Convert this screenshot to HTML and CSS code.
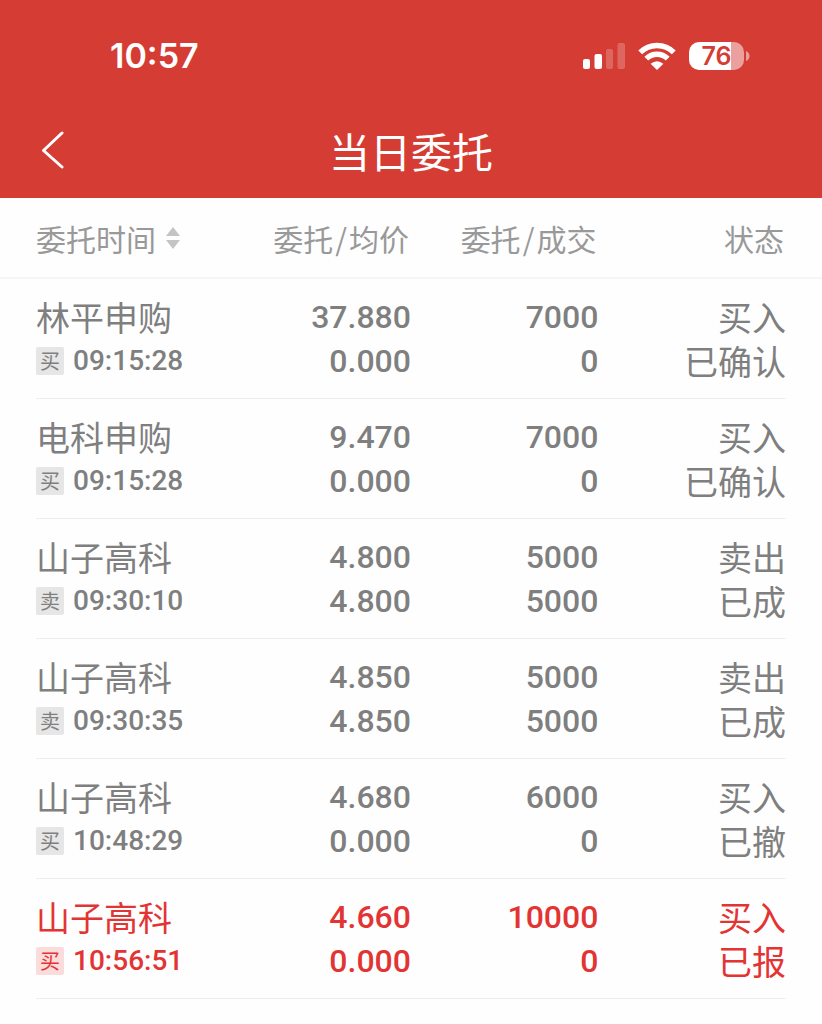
FILE: index.html
```html
<!DOCTYPE html>
<html lang="zh-CN">
<head>
<meta charset="utf-8">
<meta name="viewport" content="width=device-width, initial-scale=1">
<title>当日委托</title>
<link rel="stylesheet" href="styles.css">
</head>
<body>
<header class="top">
  <div class="status-bar">
    <time class="clock">10:57</time>
    <div class="indicators">
      <svg class="signal" width="42" height="28" viewBox="0 0 42 28" aria-hidden="true">
        <g fill="#fff">
          <rect x="0" y="17" width="7" height="10" rx="2"/>
          <rect x="11.500" y="12" width="7.500" height="15" rx="2"/>
          <rect x="23" y="7" width="7" height="20" rx="2" opacity=".22"/>
          <rect x="34.500" y="1" width="7.500" height="26" rx="2" opacity=".22"/>
        </g>
      </svg>
      <svg class="wifi" width="38" height="28" viewBox="0 0 38 28" aria-hidden="true">
        <g fill="none" stroke="#fff" stroke-width="5.400">
          <path d="M2.200 10.400A23.800 23.800 0 0 1 35.800 10.400"/>
          <path d="M8.300 16.700A15.200 15.200 0 0 1 29.700 16.700"/>
        </g>
        <path d="M19 28L12.600 21.700Q19 16.600 25.400 21.700Z" fill="#fff"/>
      </svg>
      <div class="battery">
        <span class="battery-level">76</span>
        <svg class="battery-tip" width="4" height="10" viewBox="0 0 4 10" aria-hidden="true"><path d="M0 0Q3.500 1.500 3.500 5T0 10Z" fill="#fff" opacity=".5"/></svg>
      </div>
    </div>
  </div>
  <div class="nav">
    <button class="back" type="button" aria-label="返回">
      <svg width="22" height="38" viewBox="0 0 22 38" aria-hidden="true"><path d="M20 2L1.500 19.500L20 36" fill="none" stroke="#fff" stroke-width="3" stroke-linecap="round" stroke-linejoin="round"/></svg>
    </button>
    <h1 class="title">当日委托</h1>
  </div>
</header>
<main>
  <table class="orders">
    <colgroup><col class="col-edge"><col class="col-mid"><col class="col-mid"><col class="col-edge"></colgroup>
    <thead>
      <tr>
        <th scope="col"><button class="sort" type="button">委托时间<svg width="14" height="22" viewBox="0 0 14 22" aria-hidden="true"><path d="M7 0L14 9H0ZM0 13H14L7 22Z" fill="#c4c4c4"/></svg></button></th>
        <th scope="col">委托<span class="slash">/</span>均价</th>
        <th scope="col">委托<span class="slash">/</span>成交</th>
        <th scope="col">状态</th>
      </tr>
    </thead>
    <tbody>
      <tr>
        <td><div class="name">林平申购</div><div class="when"><span class="tag">买</span><time>09:15:28</time></div></td>
        <td class="num">37.880<br>0.000</td><td class="num">7000<br>0</td><td class="state">买入<br>已确认</td>
      </tr>
      <tr>
        <td><div class="name">电科申购</div><div class="when"><span class="tag">买</span><time>09:15:28</time></div></td>
        <td class="num">9.470<br>0.000</td><td class="num">7000<br>0</td><td class="state">买入<br>已确认</td>
      </tr>
      <tr>
        <td><div class="name">山子高科</div><div class="when"><span class="tag">卖</span><time>09:30:10</time></div></td>
        <td class="num">4.800<br>4.800</td><td class="num">5000<br>5000</td><td class="state">卖出<br>已成</td>
      </tr>
      <tr>
        <td><div class="name">山子高科</div><div class="when"><span class="tag">卖</span><time>09:30:35</time></div></td>
        <td class="num">4.850<br>4.850</td><td class="num">5000<br>5000</td><td class="state">卖出<br>已成</td>
      </tr>
      <tr>
        <td><div class="name">山子高科</div><div class="when"><span class="tag">买</span><time>10:48:29</time></div></td>
        <td class="num">4.680<br>0.000</td><td class="num">6000<br>0</td><td class="state">买入<br>已撤</td>
      </tr>
      <tr class="active">
        <td><div class="name">山子高科</div><div class="when"><span class="tag">买</span><time>10:56:51</time></div></td>
        <td class="num">4.660<br>0.000</td><td class="num">10000<br>0</td><td class="state">买入<br>已报</td>
      </tr>
    </tbody>
  </table>
</main>
</body>
</html>
```

FILE: styles.css
```css
* { box-sizing: border-box; }
body {
  margin: 0;
  background: #fefefe;
  color: #7f7f7f;
  font-family: "Noto Sans CJK SC", sans-serif;
}
button {
  padding: 0;
  border: 0;
  background: none;
  color: inherit;
  font: inherit;
}
svg { display: block; }

.top { background: #d53c34; color: #fff; }
.status-bar {
  display: flex;
  align-items: center;
  justify-content: space-between;
  height: 102px;
  padding: 10px 72px 0 110px;
}
.clock { font: 600 34px/40px Inter, sans-serif; }
.indicators { display: flex; align-items: center; gap: 13px; }
.battery { display: flex; align-items: center; gap: 2px; }
.battery-level {
  width: 55px;
  border-radius: 10px;
  background: linear-gradient(90deg, #fff 76%, #eaa09c 76%);
  color: #d53c34;
  font: 600 25px/28px Inter, sans-serif;
  text-align: center;
}
.nav {
  display: grid;
  grid-template-columns: 1fr auto 1fr;
  align-items: center;
  height: 96px;
  padding: 0 42px;
}
.back { justify-self: start; }
.title { margin: 0; font-size: 41px; font-weight: 400; line-height: 60px; }

.orders { width: 100%; border-collapse: collapse; table-layout: fixed; }
.col-edge { width: 27.2%; }
.col-mid { width: 22.8%; }
.orders th {
  padding: 18px 2px 17px 0;
  border-bottom: 2px solid #f5f5f5;
  color: #999;
  font-size: 30px;
  font-weight: 400;
  line-height: 44px;
  text-align: right;
}
.orders td {
  padding: 16px 0;
  font-size: 34px;
  line-height: 44px;
  text-align: right;
}
.orders th:first-child,
.orders td:first-child { padding-left: 36px; text-align: left; }
.orders th:last-child { padding-right: 38px; }
.orders td:last-child { padding-right: 36px; }
.orders tbody tr {
  background: linear-gradient(#eee, #eee) bottom / calc(100% - 72px) 1px no-repeat;
}
.sort { display: flex; align-items: center; gap: 10px; }
.slash { padding: 0 2px; }
.when { display: flex; align-items: center; gap: 9px; font: 500 28px/44px Roboto, sans-serif; }
.tag {
  width: 28px;
  border-radius: 2px;
  background: #e6e6e6;
  font: 400 20px/28px "Noto Sans CJK SC", sans-serif;
  text-align: center;
}
.orders .num { font-family: Roboto, sans-serif; font-size: 32px; font-weight: 500; }
.active { color: #e33434; }
.active .tag { background: #fbdcdc; }
```
